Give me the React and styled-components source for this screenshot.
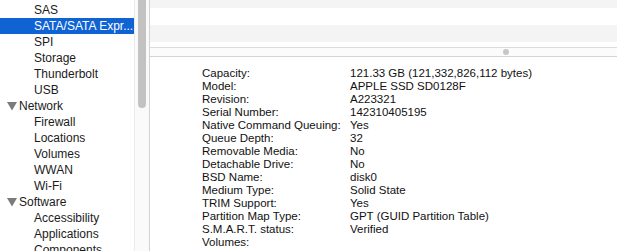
import styled, { createGlobalStyle } from 'styled-components';

const GlobalStyle = createGlobalStyle`
  html, body {
    margin: 0;
    padding: 0;
    background: #ffffff;
    overflow: hidden;
  }
  body {
    font-family: "Liberation Sans", Arial, sans-serif;
    color: #1b1b1b;
  }
`;

const sidebarItems = [
  { label: 'SAS', level: 1 },
  { label: 'SATA/SATA Expr...', level: 1, selected: true },
  { label: 'SPI', level: 1 },
  { label: 'Storage', level: 1 },
  { label: 'Thunderbolt', level: 1 },
  { label: 'USB', level: 1 },
  { label: 'Network', level: 0 },
  { label: 'Firewall', level: 1 },
  { label: 'Locations', level: 1 },
  { label: 'Volumes', level: 1 },
  { label: 'WWAN', level: 1 },
  { label: 'Wi-Fi', level: 1 },
  { label: 'Software', level: 0 },
  { label: 'Accessibility', level: 1 },
  { label: 'Applications', level: 1 },
  { label: 'Components', level: 1 },
];

const details = [
  ['Capacity:', '121.33 GB (121,332,826,112 bytes)'],
  ['Model:', 'APPLE SSD SD0128F'],
  ['Revision:', 'A223321'],
  ['Serial Number:', '142310405195'],
  ['Native Command Queuing:', 'Yes'],
  ['Queue Depth:', '32'],
  ['Removable Media:', 'No'],
  ['Detachable Drive:', 'No'],
  ['BSD Name:', 'disk0'],
  ['Medium Type:', 'Solid State'],
  ['TRIM Support:', 'Yes'],
  ['Partition Map Type:', 'GPT (GUID Partition Table)'],
  ['S.M.A.R.T. status:', 'Verified'],
  ['Volumes:', ''],
];

const Triangle = () => (
  <Disclosure width="10" height="9" viewBox="0 0 10 9">
    <polygon points="0,0 10,0 5,8.5" fill="#7b7b7b" />
  </Disclosure>
);

const App = () => {
  return (
    <>
      <GlobalStyle />
      <Window>
        <Sidebar>
          <SidebarList>
            {sidebarItems.map((item) => (
              <SidebarRow key={item.label} selected={item.selected} level={item.level}>
                {item.level === 0 && <Triangle />}
                {item.label}
              </SidebarRow>
            ))}
          </SidebarList>
          <ScrollTrack>
            <ScrollThumb />
          </ScrollTrack>
        </Sidebar>
        <Content>
          <DeviceTable>
            <StripeRow striped />
            <StripeRow />
            <StripeRow striped />
            <StripeRow />
          </DeviceTable>
          <Splitter>
            <SplitterDot />
          </Splitter>
          <Details>
            {details.map(([label, value]) => (
              <DetailRow key={label}>
                <DetailLabel>{label}</DetailLabel>
                <DetailValue>{value}</DetailValue>
              </DetailRow>
            ))}
            <DetailRow>
              <DetailLabel indent>EFI:</DetailLabel>
            </DetailRow>
          </Details>
        </Content>
      </Window>
    </>
  );
};

const Window = styled.div`
  display: flex;
  width: 617px;
  height: 251px;
  overflow: hidden;
`;

const Sidebar = styled.aside`
  display: flex;
  width: 149px;
  flex-shrink: 0;
  border-right: 1px solid #d2d2d2;
  background: #ffffff;
`;

const SidebarList = styled.ul`
  list-style: none;
  margin: 0;
  padding: 2px 0 0;
  width: 134px;
  flex-shrink: 0;
`;

const SidebarRow = styled.li`
  display: flex;
  align-items: center;
  flex-shrink: 0;
  height: 16px;
  font-size: 12px;
  white-space: nowrap;
  padding-left: ${(p) => (p.level === 0 ? '7px' : '34px')};
  background: ${(p) => (p.selected ? '#0f63d3' : 'transparent')};
  color: ${(p) => (p.selected ? '#ffffff' : '#1b1b1b')};
`;

const Disclosure = styled.svg`
  margin-right: 2px;
  margin-top: 1px;
  flex-shrink: 0;
`;

const ScrollTrack = styled.div`
  flex: 1;
  background: #fafafa;
  border-left: 1px solid #ebebeb;
  padding: 0 3px;
`;

const ScrollThumb = styled.div`
  width: 8px;
  height: 112px;
  margin-top: -4px;
  border-radius: 4px;
  background: #c2c2c2;
`;

const Content = styled.main`
  flex: 1;
  display: flex;
  flex-direction: column;
  min-width: 0;
  overflow: hidden;
`;

const DeviceTable = styled.div`
  flex-shrink: 0;
  height: 47px;
  overflow: hidden;
  display: flex;
  flex-direction: column;
`;

const StripeRow = styled.div`
  flex-shrink: 0;
  height: 17px;
  background: ${(p) => (p.striped ? '#f4f4f4' : '#ffffff')};
  &:first-child {
    margin-top: -9px;
  }
`;

const Splitter = styled.div`
  flex-shrink: 0;
  height: 8px;
  border-top: 1px solid #dcdcdc;
  border-bottom: 1px solid #d4d4d4;
  background: #fbfbfb;
  display: flex;
  align-items: center;
  padding-left: 353px;
`;

const SplitterDot = styled.div`
  width: 6px;
  height: 6px;
  border-radius: 50%;
  background: #c6c6c6;
`;

const Details = styled.div`
  flex-shrink: 0;
  padding: 9px 0 0 52px;
  display: flex;
  flex-direction: column;
`;

const DetailRow = styled.div`
  display: flex;
  flex-shrink: 0;
  height: 13px;
  align-items: center;
  font-size: 11.5px;
  white-space: nowrap;
  color: #111111;
`;

const DetailLabel = styled.span`
  width: 148px;
  flex-shrink: 0;
  padding-left: ${(p) => (p.indent ? '8px' : '0')};
  box-sizing: border-box;
`;

const DetailValue = styled.span``;

export default App;
